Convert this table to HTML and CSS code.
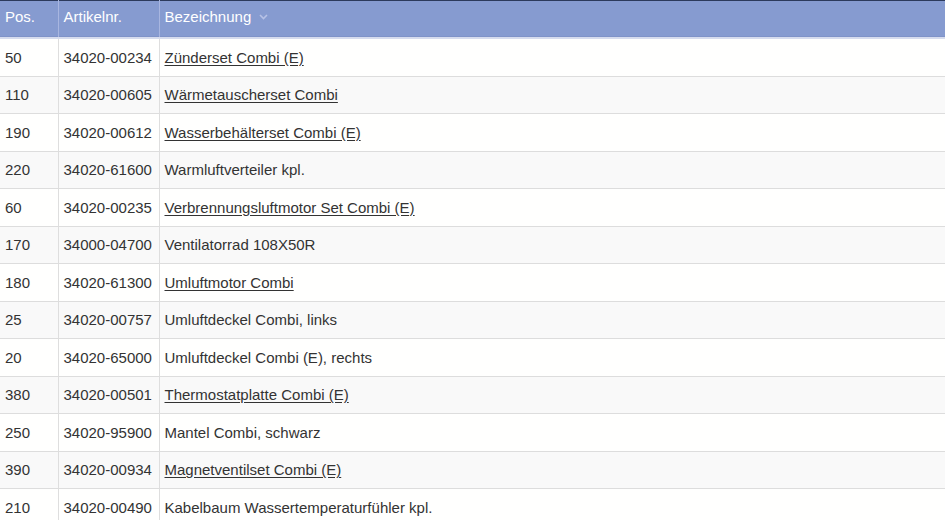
FILE: index.html
```html
<!DOCTYPE html>
<html lang="de">
<head>
<meta charset="utf-8">
<title>Ersatzteile</title>
<link rel="stylesheet" href="styles.css">
</head>
<body>
<table class="parts">
  <colgroup>
    <col class="c-pos">
    <col class="c-art">
    <col class="c-name">
  </colgroup>
  <thead>
    <tr>
      <th>Pos.</th>
      <th>Artikelnr.</th>
      <th>Bezeichnung <svg class="chev" width="9" height="6" viewBox="0 0 9 6"><path d="M1 1l3.5 3.5L8 1" fill="none" stroke="currentColor" stroke-width="1.6"/></svg></th>
    </tr>
  </thead>
  <tbody>
    <tr><td>50</td><td>34020-00234</td><td><a href="#">Zünderset Combi (E)</a></td></tr>
    <tr><td>110</td><td>34020-00605</td><td><a href="#">Wärmetauscherset Combi</a></td></tr>
    <tr><td>190</td><td>34020-00612</td><td><a href="#">Wasserbehälterset Combi (E)</a></td></tr>
    <tr><td>220</td><td>34020-61600</td><td>Warmluftverteiler kpl.</td></tr>
    <tr><td>60</td><td>34020-00235</td><td><a href="#">Verbrennungsluftmotor Set Combi (E)</a></td></tr>
    <tr><td>170</td><td>34000-04700</td><td>Ventilatorrad 108X50R</td></tr>
    <tr><td>180</td><td>34020-61300</td><td><a href="#">Umluftmotor Combi</a></td></tr>
    <tr><td>25</td><td>34020-00757</td><td>Umluftdeckel Combi, links</td></tr>
    <tr><td>20</td><td>34020-65000</td><td>Umluftdeckel Combi (E), rechts</td></tr>
    <tr><td>380</td><td>34020-00501</td><td><a href="#">Thermostatplatte Combi (E)</a></td></tr>
    <tr><td>250</td><td>34020-95900</td><td>Mantel Combi, schwarz</td></tr>
    <tr><td>390</td><td>34020-00934</td><td><a href="#">Magnetventilset Combi (E)</a></td></tr>
    <tr><td>210</td><td>34020-00490</td><td>Kabelbaum Wassertemperaturfühler kpl.</td></tr>
  </tbody>
</table>
</body>
</html>
```

FILE: styles.css
```css
html, body {
  margin: 0;
  padding: 0;
  background: #fffffe;
}

body {
  font-family: "Liberation Sans", Arial, sans-serif;
  color: #333333;
}

.parts {
  width: 945px;
  border-collapse: collapse;
  table-layout: fixed;
  font-size: 15px;
}

.c-pos { width: 58px; }
.c-art { width: 101px; }

.parts thead tr {
  background: #869bd0;
  border-top: 1px solid #2c3a5c;
}

.parts th {
  height: 31px;
  padding: 0 5px 5px;
  text-align: left;
  font-weight: normal;
  font-size: 15px;
  color: #ffffff;
  border-left: 1px solid #a8b6e0;
  border-bottom: 1px solid #7b8fc4;
  box-shadow: inset 0 -1px 0 #7f93c8;
}

.parts th:first-child { border-left: none; }

.chev {
  color: #b7c2e6;
  vertical-align: 2px;
  margin-left: 4px;
}

.parts tbody tr:first-child td {
  border-top: 2px solid #d6dcee;
}

.parts td {
  height: 36.5px;
  padding: 0 5px;
  border-left: 1px solid #dedede;
  border-bottom: 1px solid #dddddd;
  white-space: nowrap;
}

.parts td:first-child { border-left: none; }

.parts tbody tr:nth-child(even) { background: #f9f9f9; }

.parts a {
  color: #333333;
  text-decoration: underline;
  text-underline-offset: 2px;
}
```
